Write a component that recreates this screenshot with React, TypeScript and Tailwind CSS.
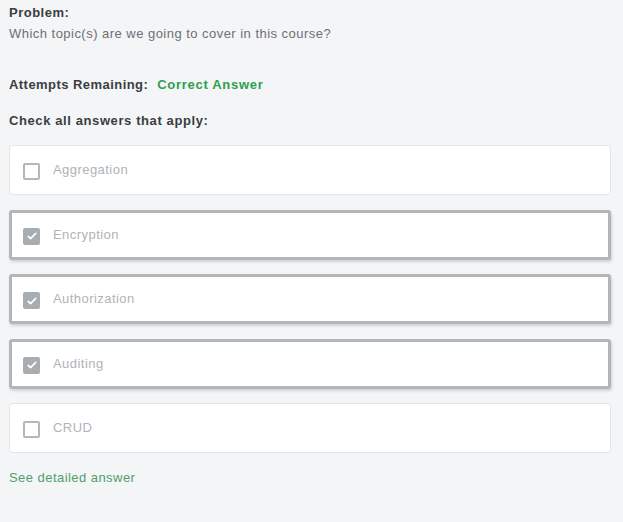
import React from 'react';

interface Option {
  label: string;
  checked: boolean;
}

const options: Option[] = [
  { label: 'Aggregation', checked: false },
  { label: 'Encryption', checked: true },
  { label: 'Authorization', checked: true },
  { label: 'Auditing', checked: true },
  { label: 'CRUD', checked: false },
];

const CheckBox: React.FC<{ checked: boolean }> = ({ checked }) =>
  checked ? (
    <span className="mt-[3px] flex h-[17px] w-[17px] shrink-0 items-center justify-center rounded-[2px] bg-[#a8adb2]">
      <svg viewBox="0 0 16 16" className="h-[12px] w-[12px]" fill="none" stroke="#fff" strokeWidth="2.4" strokeLinecap="round" strokeLinejoin="round">
        <path d="M3 8.5l3 3 7-7" />
      </svg>
    </span>
  ) : (
    <span className="mt-[3px] h-[17px] w-[17px] shrink-0 rounded-[2px] border-2 border-[#b4b6b8] bg-white" />
  );

const OptionRow: React.FC<{ option: Option }> = ({ option }) => (
  <div
    className={
      option.checked
        ? 'flex h-[50px] items-center rounded-[3px] border-[3px] border-[#b1b6ba] bg-white pl-[11px] shadow-[1px_2px_3px_rgba(0,0,0,0.15)]'
        : 'flex h-[50px] items-center rounded-[3px] border border-[#e3e5e8] bg-white pl-[13px]'
    }
  >
    <CheckBox checked={option.checked} />
    <span className="ml-[13px] text-[13px] tracking-[0.45px] text-[#b0b3b7]">{option.label}</span>
  </div>
);

export default function App() {
  return (
    <div
      className="min-h-[522px] bg-[#f4f5f7] pl-[9px] pr-[12px] pt-[2px] text-[13px]"
      style={{ fontFamily: '"Liberation Sans", Arial, sans-serif' }}
    >
      <div className="leading-[21px] font-bold tracking-[0.5px] text-[#3a3d42]">Problem:</div>
      <div className="leading-[21px] tracking-[0.47px] text-[#6d7074]">Which topic(s) are we going to cover in this course?</div>

      <div className="mt-[30px] flex leading-[21px] font-bold tracking-[0.45px]">
        <span className="text-[#3a3d42]">Attempts Remaining:</span>
        <span className="ml-[9px] tracking-[0.7px] text-[#2e9e4f]">Correct Answer</span>
      </div>

      <div className="mt-[15px] leading-[21px] font-bold tracking-[0.6px] text-[#3a3d42]">Check all answers that apply:</div>

      <div className="mt-[14px] flex flex-col gap-[14.5px]">
        {options.map((o) => (
          <OptionRow key={o.label} option={o} />
        ))}
      </div>

      <div className="mt-[15px] tracking-[0.45px] text-[#4fa06c]">See detailed answer</div>
    </div>
  );
}
